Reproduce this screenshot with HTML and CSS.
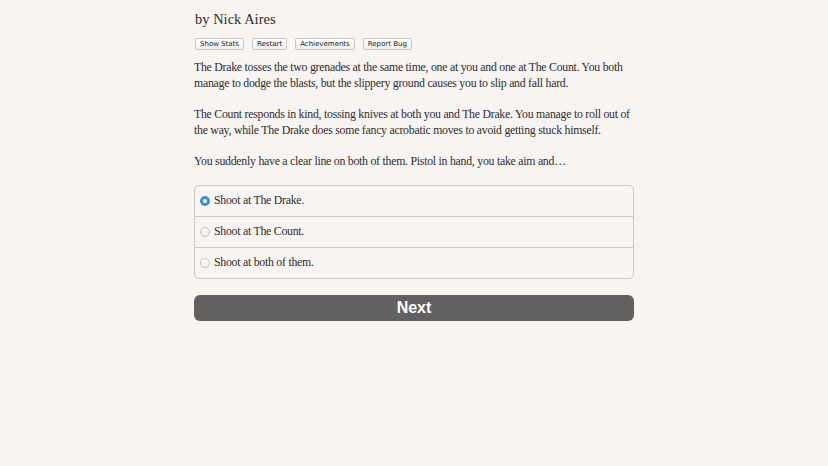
FILE: index.html
```html
<!DOCTYPE html>
<html lang="en">
<head>
  <meta charset="UTF-8" />
  <title>by Nick Aires</title>
  <link rel="stylesheet" href="styles.css">
</head>
<body>
<div class="page">
  <div class="byline">by Nick Aires</div>

  <div class="toolbar">
    <button class="tool">Show Stats</button>
    <button class="tool">Restart</button>
    <button class="tool">Achievements</button>
    <button class="tool">Report Bug</button>
  </div>

  <div class="passage">
    <p>The Drake tosses the two grenades at the same time, one at you and one at The Count. You both manage to dodge the blasts, but the slippery ground causes you to slip and fall hard.</p>
    <p>The Count responds in kind, tossing knives at both you and The Drake. You manage to roll out of the way, while The Drake does some fancy acrobatic moves to avoid getting stuck himself.</p>
    <p>You suddenly have a clear line on both of them. Pistol in hand, you take aim and…</p>
  </div>

  <ul class="choices">
    <li class="choice"><span class="radio checked"></span>Shoot at The Drake.</li>
    <li class="choice"><span class="radio"></span>Shoot at The Count.</li>
    <li class="choice"><span class="radio"></span>Shoot at both of them.</li>
  </ul>

  <button class="next">Next</button>
</div>
</body>
</html>
```

FILE: styles.css
```css
body {
  margin: 0;
  background: #f7f4f1;
  color: #2e2e2e;
  font-family: "Liberation Serif", serif;
}

.page {
  width: 440px;
  margin: 0 auto;
  padding-top: 10px;
}

.byline {
  font-size: 14.5px;
  line-height: 18px;
  padding-left: 1px;
}

.toolbar {
  display: flex;
  gap: 8px;
  margin-top: 10px;
  padding-left: 1px;
}
.tool {
  font-family: "DejaVu Sans", sans-serif;
  font-size: 7px;
  height: 12px;
  padding: 0 4px;
  line-height: 10px;
  border: 1px solid #c9c6c3;
  border-radius: 2px;
  background: linear-gradient(#ffffff, #f0eeec);
  color: #222;
}

.passage {
  margin-top: 9px;
}
.passage p {
  margin: 0 0 15px;
  font-size: 11.8px;
  letter-spacing: -0.25px;
  line-height: 16px;
}

.choices {
  list-style: none;
  margin: 0;
  padding: 0;
  border: 1px solid #cbc7c3;
  border-radius: 5px;
  margin-top: 16px;
}
.choice {
  display: flex;
  align-items: center;
  height: 30px;
  font-size: 11.8px;
  letter-spacing: -0.25px;
  padding: 0 0 1px 5px;
  box-sizing: border-box;
  height: 30px;
}
.choice + .choice {
  border-top: 1px solid #cbc7c3;
  height: 31px;
}

.radio {
  width: 10px;
  height: 10px;
  border-radius: 50%;
  border: 1px solid #c4c2c0;
  background: linear-gradient(#fdfdfd, #eeeeee);
  margin-right: 4px;
  box-sizing: border-box;
}
.radio.checked {
  border: 3px solid #3b8ee0;
  background: #fff;
}

.next {
  display: block;
  width: 100%;
  height: 26px;
  margin-top: 16px;
  border: none;
  border-radius: 6px;
  background: #636160;
  color: #fff;
  font-family: "Liberation Sans", sans-serif;
  font-weight: bold;
  font-size: 16px;
}
```
